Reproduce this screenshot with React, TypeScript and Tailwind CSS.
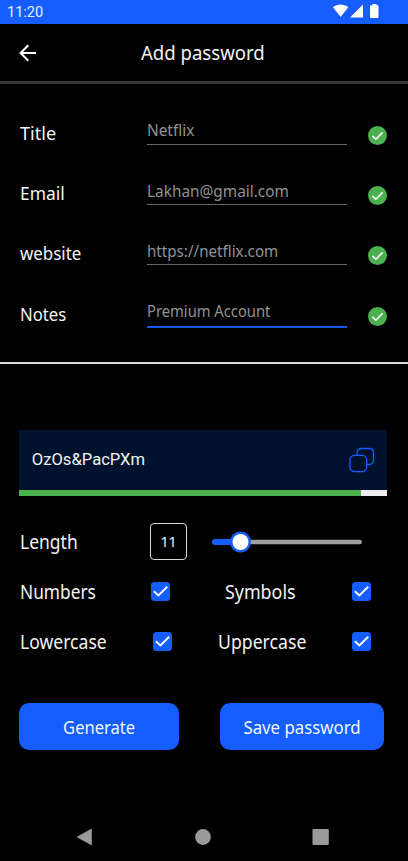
import { clsx } from 'clsx';

type LabelProps = { text: string; className: string };

// Single line of text, condensed horizontally by a scale-x class
function Label({ text, className }: LabelProps) {
  return <span className={clsx('inline-block whitespace-nowrap leading-none', className)}>{text}</span>;
}

function StatusBar() {
  return (
    <div className="flex h-[23.7px] items-center justify-between bg-[#155dfc] pr-[29px] pl-[7px]">
      <span className="pt-[2px] font-['Roboto',sans-serif] text-[14.5px] leading-none text-[#e8efff]">11:20</span>
      <svg width="46" height="14" viewBox="0 0 46 14" fill="#fff" className="-mt-[1px]">
        <path d="M0 3.3C4.300 -0.5 11 -0.5 15.300 3.300L7.650 13z" />
        <path d="M30 0.600V13.400H17z" />
        <path d="M39.500 0H43.500V1.300H44.800Q45.500 1.300 45.500 2V13.300Q45.500 14 44.800 14H37.700Q37 14 37 13.300V2Q37 1.300 37.700 1.300H39.500z" />
      </svg>
    </div>
  );
}

function Header() {
  return (
    <header className="flex h-[60.300px] items-center border-b-3 border-[#363636] pl-[19px]">
      <svg width="18" height="18" viewBox="0 0 18 18" fill="none" stroke="#fff" strokeWidth="2" className="mt-px">
        <path d="M17 9H2M9.300 1.300L1.600 9L9.300 16.700" />
      </svg>
      <div className="ml-[104px] pt-[4px] text-[#f3f3f3]">
        <Label text="Add password" className="origin-left scale-x-[0.952] text-[19.5px]" />
      </div>
    </header>
  );
}

type Field = { label: string; labelFit: string; value: string; valueFit: string; active?: boolean };

const fields: Field[] = [
  { label: 'Title', labelFit: 'scale-x-[1.02]', value: 'Netflix', valueFit: 'scale-x-[0.98]' },
  { label: 'Email', labelFit: 'scale-x-[0.98]', value: 'Lakhan@gmail.com', valueFit: 'scale-x-[0.98]' },
  { label: 'website', labelFit: 'scale-x-[0.95]', value: 'https://netflix.com', valueFit: 'scale-x-[0.965]' },
  { label: 'Notes', labelFit: 'scale-x-[0.94]', value: 'Premium Account', valueFit: 'scale-x-[0.94]', active: true },
];

function FieldRow({ label, labelFit, value, valueFit, active }: Field) {
  return (
    <div className="flex h-[60.400px] items-center">
      <div className="w-[127px] pb-[1px] text-[#f3f3f3]">
        <Label text={label} className={clsx('origin-left text-[17.8px]', labelFit)} />
      </div>
      <div
        className={clsx(
          'flex w-[200px] items-start pt-[3.500px] text-[#929292]',
          active ? 'mb-[2px] h-[27px] border-b-[2.500px] border-[#1558f0]' : 'mb-[4px] h-[25px] border-b border-[#666]',
        )}
      >
        <Label text={value} className={clsx('origin-left text-[15.7px]', valueFit)} />
      </div>
      <svg width="19" height="19" viewBox="0 0 19 19" className="mt-[2px] ml-[20.500px]">
        <circle cx="9.500" cy="9.500" r="9.500" fill="#4caf50" />
        <path d="M4.500 9.900L7.900 13.200L14.600 6.400" fill="none" stroke="#fff" strokeWidth="1.500" />
      </svg>
    </div>
  );
}

function PasswordPanel() {
  return (
    <section className="mt-[66px] mr-[21px] ml-[19.300px]">
      <div className="flex h-[60.500px] items-center justify-between bg-[#00122e] pr-[12px] pl-[12.500px]">
        <span className="font-['Roboto',sans-serif] text-[16.600px] leading-none text-[#f3f3f3]">OzOs&amp;PacPXm</span>
        <svg width="26" height="26" viewBox="0 0 26 26" fill="none" stroke="#155dfc" strokeWidth="1.300">
          <rect x="1" y="8.300" width="16.700" height="16.300" rx="4.500" />
          <path d="M8.100 8.300V6.200Q8.100 1.500 12.800 1.500H20Q24.600 1.500 24.600 6.200V12.800Q24.600 17.500 20 17.500H17.700" />
        </svg>
      </div>
      <div className="h-[6px] bg-[#f0ebf0]">
        <div className="h-full w-[93%] bg-[#4caf50]" />
      </div>
    </section>
  );
}

function LengthRow() {
  return (
    <div className="mt-[26.500px] flex h-[38px] items-center pl-[20px]">
      <div className="w-[130px] pt-[2px] text-[#f3f3f3]">
        <Label text="Length" className="origin-left scale-x-[0.92] text-[19px]" />
      </div>
      <div className="flex h-[37px] w-[37px] items-center justify-center rounded-[4px] border border-[#d8d8d8] text-[#f3f3f3]">
        <Label text="11" className="scale-x-[0.95] text-[15px]" />
      </div>
      <svg width="151" height="22" viewBox="0 0 151 22" className="ml-[25px]">
        <rect x="20" y="8.700" width="130" height="4.600" rx="2.300" fill="#9e9e9e" />
        <rect x="0" y="8" width="32" height="6" rx="3" fill="#155dfc" />
        <circle cx="28.500" cy="11" r="10.500" fill="#155dfc" />
        <circle cx="28.500" cy="11" r="8" fill="#fff" />
      </svg>
    </div>
  );
}

function Check() {
  return (
    <svg width="19" height="19" viewBox="0 0 19 19" className="shrink-0">
      <rect width="19" height="19" rx="3.500" fill="#155dfc" />
      <path d="M2.900 9.200L7.400 13.500L16.200 4.800" fill="none" stroke="#fff" strokeWidth="1.900" />
    </svg>
  );
}

function Options() {
  return (
    <div className="pl-[20px] text-[19px] text-[#f3f3f3]">
      <div className="mt-[6px] flex h-[50px] items-center">
        <div className="w-[131px]">
          <Label text="Numbers" className="origin-left scale-x-[0.91]" />
        </div>
        <Check />
        <div className="w-[182px] pl-[55px]">
          <Label text="Symbols" className="origin-left scale-x-[0.94]" />
        </div>
        <Check />
      </div>
      <div className="flex h-[50px] items-center">
        <div className="w-[133px]">
          <Label text="Lowercase" className="origin-left scale-x-[0.925]" />
        </div>
        <Check />
        <div className="w-[180px] pl-[46px]">
          <Label text="Uppercase" className="origin-left scale-x-[0.93]" />
        </div>
        <Check />
      </div>
    </div>
  );
}

function Actions() {
  return (
    <div className="mt-[36px] flex gap-[41px] pl-[19.300px] text-[17.500px] text-[#f0f4ff]">
      <button className="h-[47px] w-[160px] rounded-[10px] bg-[#155dfc] pt-[2px]">
        <Label text="Generate" className="scale-x-[0.945]" />
      </button>
      <button className="h-[47px] w-[164px] rounded-[10px] bg-[#155dfc] pt-[2px]">
        <Label text="Save password" className="scale-x-[0.96]" />
      </button>
    </div>
  );
}

function NavBar() {
  return (
    <nav className="mt-auto flex h-[49px] items-center pl-[76px]">
      <svg width="254" height="18" viewBox="0 0 254 18" fill="#9a9a9a">
        <path d="M15.500 1V17L1 9z" stroke="#9a9a9a" strokeWidth="0.600" strokeLinejoin="round" />
        <circle cx="127" cy="9" r="7.900" />
        <rect x="236.500" y="1" width="16.300" height="16" rx="1" />
      </svg>
    </nav>
  );
}

export default function App() {
  return (
    <div className="flex h-[861px] w-[408px] flex-col overflow-hidden bg-black font-['Noto_Sans',sans-serif]">
      <StatusBar />
      <Header />
      <section className="h-[280px] border-b-[2.500px] border-[#dcdcdc] pt-[20px] pl-[20px]">
        {fields.map((field) => (
          <FieldRow key={field.label} {...field} />
        ))}
      </section>
      <PasswordPanel />
      <LengthRow />
      <Options />
      <Actions />
      <NavBar />
    </div>
  );
}
